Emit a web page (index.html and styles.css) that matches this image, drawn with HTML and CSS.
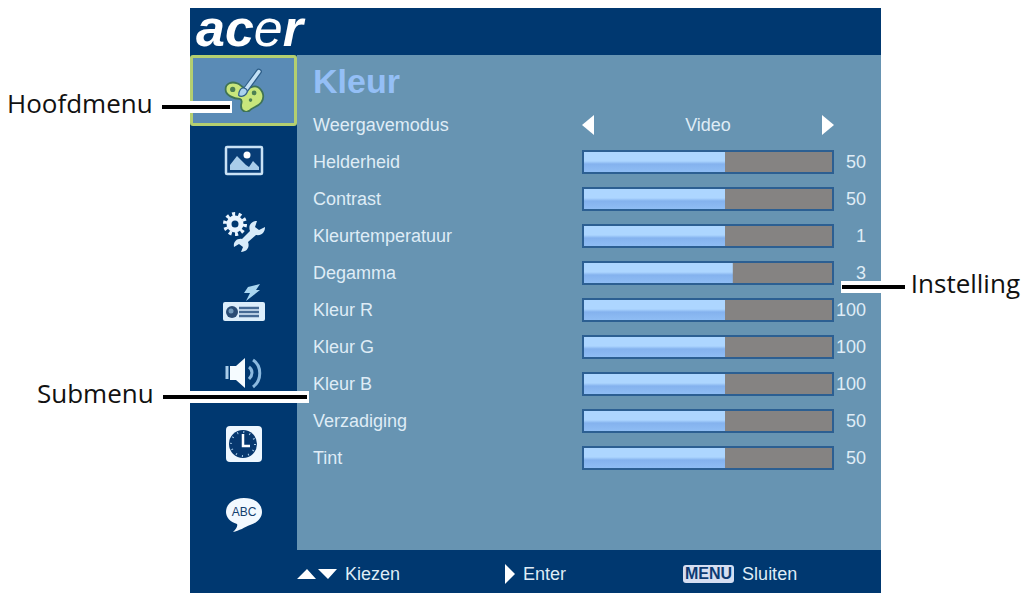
FILE: index.html
```html
<!DOCTYPE html>
<html lang="nl">
  <head>
    <meta charset="UTF-8" />
    <meta name="viewport" content="width=device-width, initial-scale=1.0" />
    <title>Kleur</title>
    <link rel="stylesheet" href="styles.css">
  </head>
  <body>
    <div class="figure">
      <div class="osd">
        <header class="header">
          <div class="logo">ac<span class="thin">e</span>r</div>
        </header>

        <div class="main">
          <nav class="sidebar">
            <button class="tab active" aria-label="Kleur">
              <svg width="44" height="44" viewBox="2 2 37 37">
                <path d="M5 20c0-5 5-7 10-5 3 1 4 4 7 4 3 1 6-3 10-1 5 3 6 9 3 13-3 4-8 4-10 7-3 2-7 0-7-4 0-3 2-5-1-6-5 0-12-3-12-8z" fill="#c8e67c" stroke="#3f7355" stroke-width="1.5"/>
                <circle cx="11" cy="20" r="2.2" fill="#4d8053"/>
                <circle cx="29" cy="23" r="2" fill="#4d8053"/>
                <circle cx="26" cy="29" r="1.5" fill="#4d8053"/>
                <path d="M20 23L33 5" stroke="#2d5d87" stroke-width="5" stroke-linecap="round"/>
                <path d="M22 20L33 5" stroke="#c3e0f5" stroke-width="3" stroke-linecap="round"/>
                <path d="M16 25c0-4 2-7 5-6s3 4 0 6c-2 1-4 1-5 0z" fill="#a9d2ed" stroke="#2d5d87"/>
              </svg>
            </button>
            <button class="tab" aria-label="Beeld">
              <svg width="40" height="32" viewBox="0 0 40 32">
                <rect x="2" y="2" width="36" height="27" rx="1" fill="#083d76" stroke="#c9e2f5" stroke-width="2.5"/>
                <circle cx="23" cy="10" r="3.5" fill="#fff"/>
                <path d="M6 25v-5l7-9 9 9 3 2 4-6 6 6v3z" fill="#a9cdea"/>
              </svg>
            </button>
            <button class="tab" aria-label="Beheer">
              <svg width="42" height="42" viewBox="0 0 42 42">
                <circle cx="12" cy="13" r="6" fill="none" stroke="#eaf5ff" stroke-width="5"/>
                <circle cx="12" cy="13" r="10" fill="none" stroke="#eaf5ff" stroke-width="4" stroke-dasharray="3 3.28"/>
                <path d="M34 10c-6 0-9 5-7 10l-8 8c-5-1-9 3-8 8l5-3 4 3-2 5c6 0 9-5 7-10l8-7c6 1 9-3 9-8l-6 3-4-3z" fill="#d7ebfa"/>
              </svg>
            </button>
            <button class="tab" aria-label="Instellingen">
              <svg width="42" height="40" viewBox="0 0 42 40">
                <path d="M25 4l12-3-4 6h4L23 18l4-8h-6z" fill="#a9d6f0"/>
                <rect x="0" y="19" width="42" height="19" rx="2" fill="#dceefb"/>
                <circle cx="9" cy="29" r="6" fill="#294c75"/>
                <circle cx="8" cy="28" r="2.5" fill="#7199bb"/>
                <path d="M16 25h20M16 29h20M16 33h20" stroke="#456a94" stroke-width="2.6"/>
              </svg>
            </button>
            <button class="tab" aria-label="Audio">
              <svg width="40" height="36" viewBox="0 0 40 36">
                <path d="M3 11v13" stroke="#a9cdea" stroke-width="3"/>
                <path d="M6 11h6l9-8v30l-9-8H6z" fill="#f5fbff"/>
                <path d="M25 12c4 3 4 8 0 12M29 5c9 6 9 20 0 27" fill="none" stroke="#8bb9df" stroke-width="3"/>
              </svg>
            </button>
            <button class="tab" aria-label="Timer">
              <svg width="38" height="38" viewBox="0 0 38 38">
                <rect x="1" y="1" width="36" height="36" rx="4" fill="#eef7ff"/>
                <circle cx="18" cy="19" r="14" fill="#07386f"/>
                <circle cx="18" cy="19" r="12" fill="none" stroke="#a9cdea" stroke-width="2" stroke-dasharray="1 5.28"/>
                <path d="M18 9v12h7" fill="none" stroke="#fff" stroke-width="2.5"/>
              </svg>
            </button>
            <button class="tab" aria-label="Taal">
              <svg width="38" height="36" viewBox="0 0 38 36">
                <path d="M19 1c11 0 18 6 18 14 0 6-5 11-12 13-5 2-11 6-17 7 3-3 5-6 4-8C5 25 1 20 1 15 1 7 8 1 19 1z" fill="#f2f9ff"/>
                <text class="abc" x="19" y="19" text-anchor="middle">ABC</text>
              </svg>
            </button>
          </nav>

          <section class="content">
            <h1 class="title">Kleur</h1>

            <div class="row">
              <span class="label">Weergavemodus</span>
              <div class="chooser">
                <button class="arrow" aria-label="Vorige">
                  <svg width="12" height="20" viewBox="0 0 12 20"><path d="M12 0v20L0 10z" fill="#fff"/></svg>
                </button>
                <span>Video</span>
                <button class="arrow" aria-label="Volgende">
                  <svg width="12" height="20" viewBox="0 0 12 20"><path d="M0 0v20l12-10z" fill="#fff"/></svg>
                </button>
              </div>
            </div>
            <div class="row">
              <label class="label" for="helderheid">Helderheid</label>
              <input class="slider" type="range" id="helderheid" style="--fill: 57%" />
              <output class="value" for="helderheid">50</output>
            </div>
            <div class="row">
              <label class="label" for="contrast">Contrast</label>
              <input class="slider" type="range" id="contrast" style="--fill: 57%" />
              <output class="value" for="contrast">50</output>
            </div>
            <div class="row">
              <label class="label" for="temperatuur">Kleurtemperatuur</label>
              <input class="slider" type="range" id="temperatuur" style="--fill: 57%" />
              <output class="value" for="temperatuur">1</output>
            </div>
            <div class="row">
              <label class="label" for="degamma">Degamma</label>
              <input class="slider" type="range" id="degamma" style="--fill: 60%" />
              <output class="value" for="degamma">3</output>
            </div>
            <div class="row">
              <label class="label" for="kleur-r">Kleur R</label>
              <input class="slider" type="range" id="kleur-r" style="--fill: 57%" />
              <output class="value" for="kleur-r">100</output>
            </div>
            <div class="row">
              <label class="label" for="kleur-g">Kleur G</label>
              <input class="slider" type="range" id="kleur-g" style="--fill: 57%" />
              <output class="value" for="kleur-g">100</output>
            </div>
            <div class="row">
              <label class="label" for="kleur-b">Kleur B</label>
              <input class="slider" type="range" id="kleur-b" style="--fill: 57%" />
              <output class="value" for="kleur-b">100</output>
            </div>
            <div class="row">
              <label class="label" for="verzadiging">Verzadiging</label>
              <input class="slider" type="range" id="verzadiging" style="--fill: 57%" />
              <output class="value" for="verzadiging">50</output>
            </div>
            <div class="row">
              <label class="label" for="tint">Tint</label>
              <input class="slider" type="range" id="tint" style="--fill: 57%" />
              <output class="value" for="tint">50</output>
            </div>
          </section>
        </div>

        <footer class="footer">
          <div class="hint">
            <svg width="40" height="10" viewBox="0 0 40 10"><path d="M0 10h19L10 0zM21 0h19l-9 10z" fill="#fff"/></svg>
            <span>Kiezen</span>
          </div>
          <div class="hint">
            <svg width="10" height="20" viewBox="0 0 10 20"><path d="M0 0v20l10-10z" fill="#fff"/></svg>
            <span>Enter</span>
          </div>
          <div class="hint">
            <span class="key">MENU</span>
            <span>Sluiten</span>
          </div>
        </footer>
      </div>

      <div class="callout hoofdmenu"><span>Hoofdmenu</span><i class="line"></i></div>
      <div class="callout submenu"><span>Submenu</span><i class="line"></i></div>
      <div class="callout instelling"><i class="line"></i><span>Instelling</span></div>
    </div>
  </body>
</html>
```
FILE: styles.css
```css
* {
  box-sizing: border-box;
}
body {
  margin: 0;
  background: #fff;
  font-family: "Liberation Sans", Arial, sans-serif;
}
.figure {
  position: relative;
  padding: 8px 142px 4px 190px;
}
.osd {
  background: #003870;
  color: #dfecf6;
  font-size: 18px;
  line-height: 20px;
}
.header {
  height: 47px;
  padding-left: 6px;
}
.logo {
  font-size: 52px;
  line-height: 40px;
  font-weight: bold;
  font-style: italic;
  color: #fff;
}
.thin {
  font-weight: normal;
}
.main {
  display: flex;
}
.sidebar {
  width: 107px;
  display: flex;
  flex-direction: column;
}
.tab {
  flex: 1;
  display: flex;
  align-items: center;
  justify-content: center;
  padding: 0;
  border: 3px solid transparent;
  border-radius: 3px;
  background: none;
}
.tab.active {
  background: #5a8bb6;
  border-color: #b4cf70;
}
.abc {
  font-size: 12px;
  fill: #123e6e;
}
.content {
  flex: 1;
  padding: 8px 15px 74px 16px;
  background: #6794b2;
}
.title {
  margin: 0 0 7px;
  font-size: 34px;
  line-height: 36px;
  color: #94bff6;
}
.row {
  display: grid;
  grid-template-columns: 1fr 252px 32px;
  align-items: center;
  height: 37px;
}
.chooser {
  display: flex;
  align-items: center;
  justify-content: space-between;
}
.arrow {
  display: flex;
  padding: 0;
  border: none;
  background: none;
}
.slider {
  appearance: none;
  width: 100%;
  height: 24px;
  margin: 0;
  border: 2px solid #2c5f92;
  background: linear-gradient(#add6ff 45%, #84b2ee 60%, #8fbdf4) no-repeat 0 0 / var(--fill) 100% #858382;
}
.slider::-webkit-slider-thumb {
  appearance: none;
  width: 0;
  height: 0;
}
.value {
  text-align: right;
}
.footer {
  display: grid;
  grid-template-columns: 208px 178px 1fr;
  padding: 4px 0 0 107px;
}
.hint {
  display: flex;
  align-items: center;
  gap: 8px;
  height: 39px;
}
.key {
  padding: 0 2px;
  border-radius: 3px;
  background: #d5def2;
  color: #0c3a72;
  font-size: 16px;
  line-height: 18px;
  font-weight: bold;
}

/* callouts */
.callout {
  position: absolute;
  display: flex;
  align-items: center;
  color: #111;
  font-family: "Open Sans", "Noto Sans", sans-serif;
  font-size: 26px;
  line-height: 30px;
}
.line {
  height: 12px;
  margin-top: 8px;
  border: solid #fff;
  border-width: 4px 0;
  background: #000;
}
.hoofdmenu {
  top: 88px;
  left: 7px;
  width: 225px;
}
.submenu {
  top: 378px;
  left: 37px;
  width: 272px;
}
.hoofdmenu .line,
.submenu .line {
  flex: 1;
  margin-left: 9px;
  border-right-width: 2px;
}
.instelling {
  top: 268px;
  right: 3px;
}
.instelling .line {
  width: 64px;
  margin-right: 6px;
  border-left-width: 1px;
}
```
